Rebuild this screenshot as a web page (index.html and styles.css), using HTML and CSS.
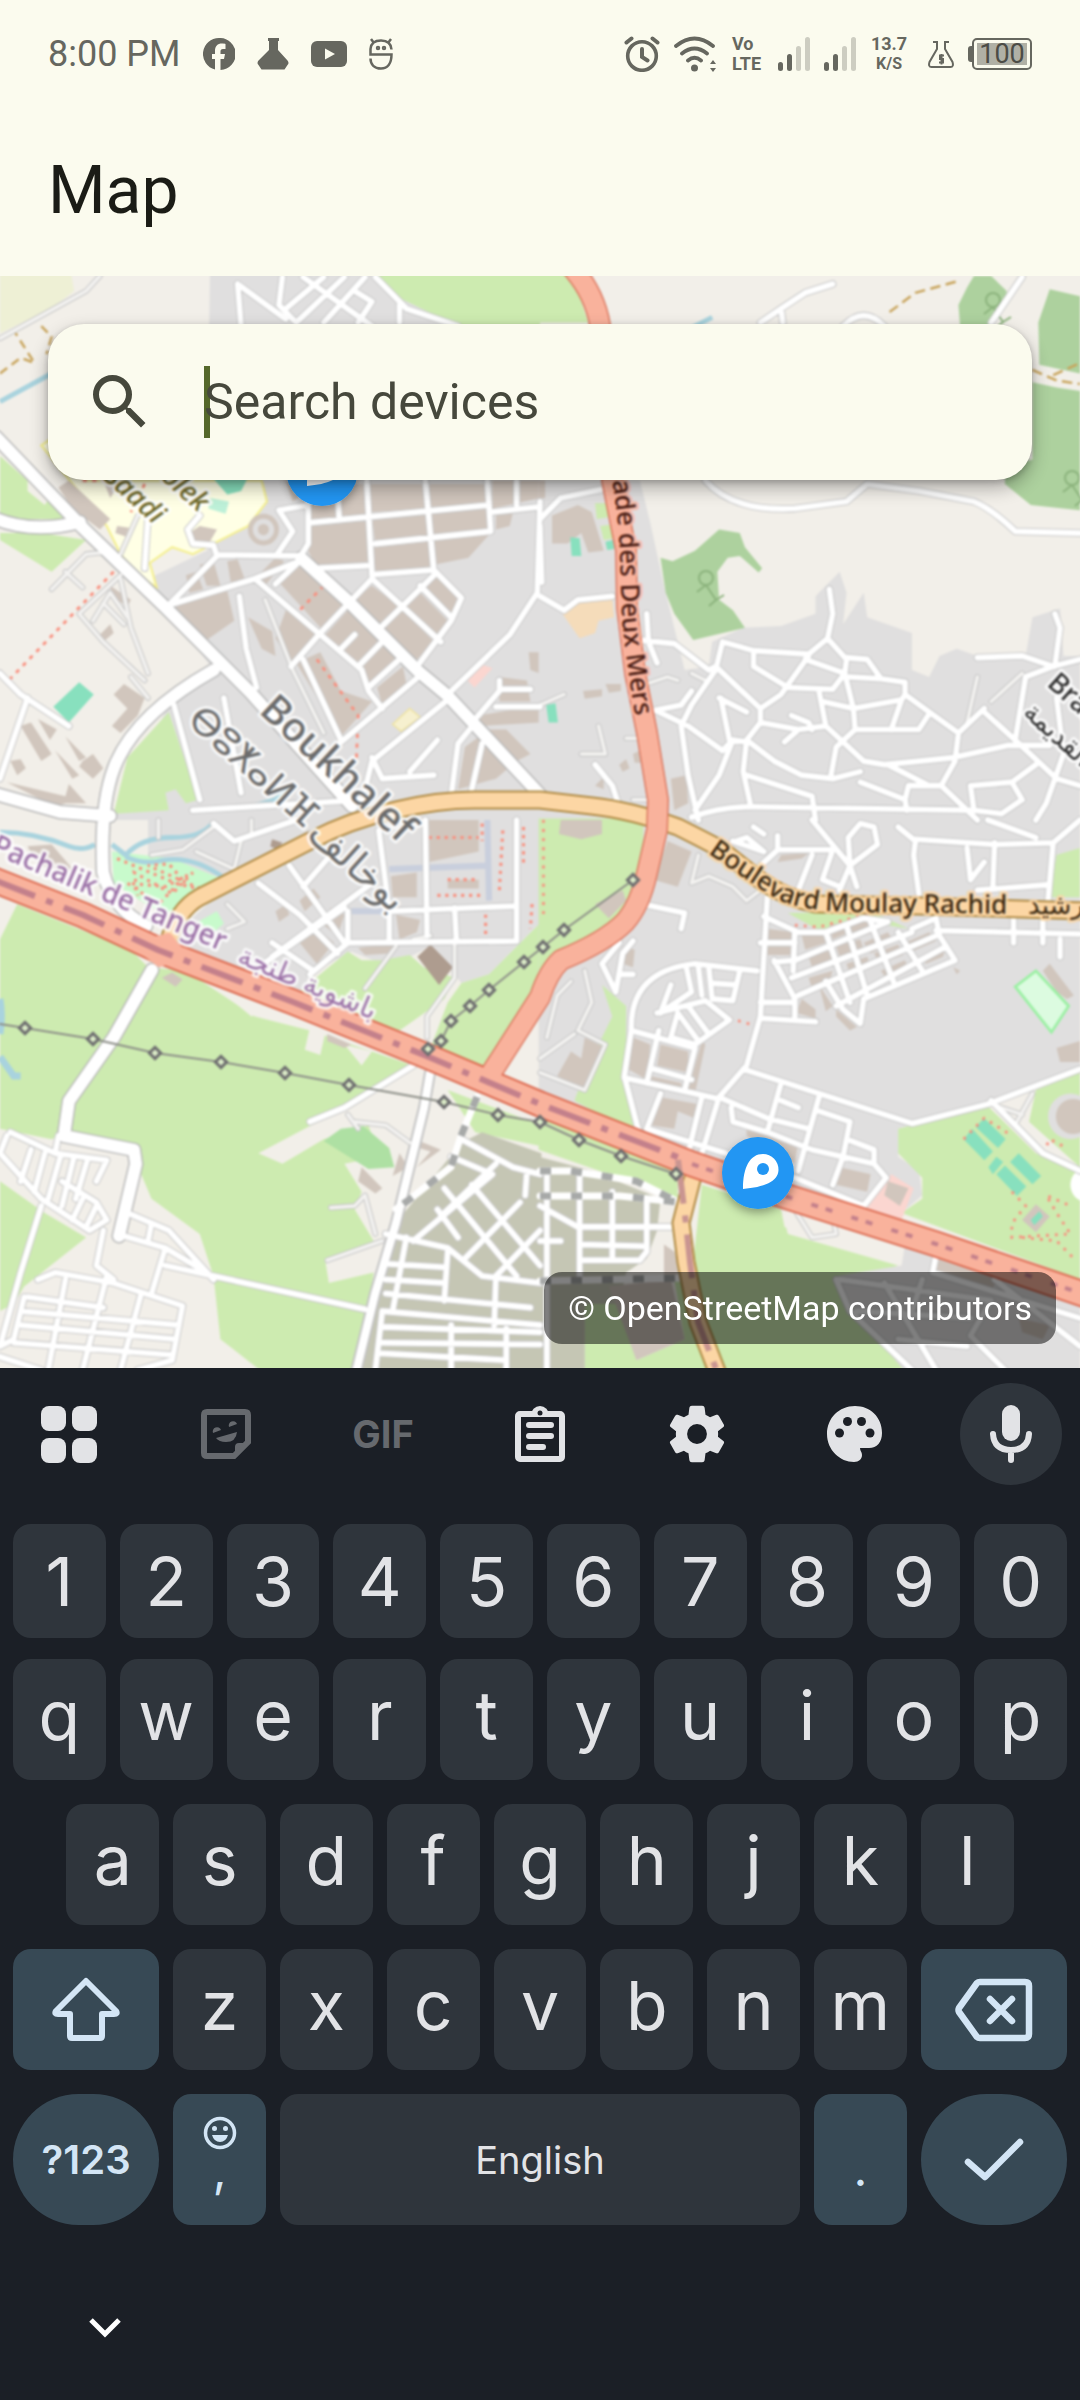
FILE: index.html
```html
<!DOCTYPE html>
<html lang="en">
<head>
<meta charset="utf-8">
<meta name="viewport" content="width=device-width, initial-scale=1">
<title>Map</title>
<link rel="stylesheet" href="styles.css">
</head>
<body>
<div class="phone">
  <header class="app-header">
    <div class="status-bar">
      <div class="status-left">
        <time class="clock">8:00 PM</time>
        <svg width="32" height="32" viewBox="0 0 32 32" aria-hidden="true"><path d="M16 0a16 16 0 0 0-4 31.500V21H9v-5h3v-3c0-5 2.500-7.500 7-7.500 1.500 0 3 .300 3.500.500V11h-2.500c-2 0-2.500 1-2.500 2.500V16h4.500l-1 5h-3.500v11A16 16 0 0 0 16 0z" fill="currentColor"/></svg>
        <svg width="32" height="32" viewBox="0 0 32 32" aria-hidden="true"><path d="M11 0h11v3h-1v9l9.500 10.500q2 2.500 0 4.500l-3 4.500H4.500l-3-4.500q-2-2 0-4.500L12 12V3h-1z" fill="currentColor"/></svg>
        <svg width="36" height="28" viewBox="0 0 36 28" aria-hidden="true"><rect y="1" width="36" height="26" rx="6" fill="currentColor"/><path d="M14 8.500v11l10-5.500z" fill="#fbfbee"/></svg>
        <svg width="24" height="32" viewBox="0 0 24 32" fill="none" stroke="currentColor" stroke-width="2.500" aria-hidden="true"><path d="M22.500 11.500C22 5 18 2.500 12 2.500S2 5 1.500 11v5.500h21c0 9-4 14-10.500 14S1.500 26.500 1.500 20.500M2 1l3 4M22 1l-3 4"/><circle cx="9" cy="10" r="1" /><circle cx="15" cy="10" r="1"/></svg>
      </div>
      <div class="status-right">
        <svg width="36" height="36" viewBox="0 0 36 36" fill="none" stroke="currentColor" stroke-width="3.600" stroke-linecap="round" aria-hidden="true"><circle cx="18" cy="20" r="14.300"/><path d="M18 13v8l5.500 3.500M2.500 6.500 7.500 2.500M33.500 6.500 28.500 2.500" stroke-width="4"/></svg>
        <svg width="44" height="36" viewBox="0 0 44 36" fill="none" stroke="currentColor" stroke-width="3.800" stroke-linecap="round" aria-hidden="true"><path d="M2 10Q20.500-5 39 10M8 17.500q12.500-10 25 0M14 24.500q6.500-5.500 13 0"/><circle cx="20.500" cy="32" r="3.500" fill="currentColor" stroke="none"/><path d="M39 24l3 4h-6zM39 36l3-4h-6z" fill="currentColor" stroke="none"/></svg>
        <span class="volte"><span>Vo</span><span>LTE</span></span>
        <svg width="32" height="34" viewBox="0 0 32 34" aria-hidden="true"><g fill="currentColor"><rect y="25" width="5" height="9" rx="2.500"/><rect x="9" y="17" width="5" height="17" rx="2.500"/></g><g fill="#cdcdc1"><rect x="18" y="9" width="5" height="25" rx="2.500"/><rect x="27" y="0" width="5" height="34" rx="2.500"/></g></svg>
        <svg width="32" height="34" viewBox="0 0 32 34" aria-hidden="true"><g fill="currentColor"><rect y="25" width="5" height="9" rx="2.500"/><rect x="9" y="17" width="5" height="17" rx="2.500"/></g><g fill="#cdcdc1"><rect x="18" y="9" width="5" height="25" rx="2.500"/><rect x="27" y="0" width="5" height="34" rx="2.500"/></g></svg>
        <span class="net-speed"><span>13.7</span><span class="net-unit">K/S</span></span>
        <svg width="26" height="28" viewBox="0 0 26 28" fill="none" stroke="currentColor" stroke-width="2" aria-hidden="true"><path d="M5 2h4v7L1.500 22q-1.500 5 2 5h19q3.500 0 2-5L17 9V2h4"/><path d="M16 15.500h-4v3.500h3v3.500h-4M13.500 14v10.500"/></svg>
        <span class="battery"><span class="battery-tip"></span><span class="battery-body"><span class="battery-level">100</span></span></span>
      </div>
    </div>
    <h1 class="title">Map</h1>
  </header>

  <main class="map">
    <svg class="map-canvas" viewBox="0 276 1080 1092" preserveAspectRatio="xMidYMid slice" role="img" aria-label="Street map of Boukhalef">
      <defs>
        <g id="minor">
          <path transform="translate(0 270) scale(.3444 .3508)" d="M690 40L700 160M690 40L830 140M820 20L810 100L860 150M880 20L1080 160M1000 20L860 150M1060 20L940 150M940 20L830 110M1030 60L1080 90L1040 150M1090 20L1180 110L1330 160M1160 100V150M895 600V780L870 820M905 720L1420 670M1090 780L1425 745L1415 600M1065 600L1080 870M1235 600L1260 860M920 850L1065 843M1085 868L1260 855L1340 935L1310 1000L1215 1125M980 640L985 710M1500 600V670M810 685L895 670M810 685L850 745L805 810M630 812L870 815M490 955L630 815L620 785L560 780L545 740L580 700M490 955L740 880L870 830M740 880L1050 1140L1070 1200L1110 1250M800 895L870 830M1080 880L930 1035L845 1130M1080 880L1280 1060M1260 870L1105 1020M1220 900L1310 990M1110 1060L1040 1130M1160 1110L1070 1190M990 1080L1030 1040M695 930L715 1080L745 1190M880 1110L990 1340M1215 1160L985 1350M1300 1225L1080 1400L1060 1480M1380 1290L1330 1350L1310 1500M1400 1350L1370 1480M1560 920L1480 1040L1300 1210M1568 660L1560 920M1430 690L1568 675M1080 1390L1110 1450L1260 1440M1270 1340L1190 1430M1450 1170V1200L1380 1280M1450 1195H1540M1440 1245H1568M505 1240L580 1510M650 1220L700 1490M560 1540L1060 1510M0 1150L60 1210L200 1300M80 1220L0 1450M430 700L420 850"/>
          <path transform="translate(540 270) scale(.3444 .3508)" d="M480 600Q560 690 740 680L890 660L950 610L1100 630L1260 660Q1310 680 1380 745L1568 750M850 40L770 65L700 110L640 150M700 110L705 150M880 160Q940 100 1000 160M1400 20L1310 150M0 710L60 650L180 625M0 930L70 970L110 940L210 930M0 730L5 890M840 910L850 980L835 1050L780 1095L620 1085L530 1060L510 1140L440 1240L410 1300L430 1440L460 1568M290 1055L390 1065L490 1140L510 1130L640 1250L700 1210L780 1100M310 980L315 1060L340 1120M620 1090V1130L720 1190L850 1195L885 1150L770 1110M835 1050L890 1110L885 1150L910 1250L915 1310L860 1360L845 1440M890 1105L950 1110L990 1165L1060 1175V1210L1130 1260L1215 1320L1205 1400L1165 1470L1270 1568M900 1160L990 1165M810 1200L830 1300L750 1310L640 1290M600 1345L560 1340L530 1370L430 1300L335 1255L410 1240L440 1200M820 1230L910 1250L1050 1225L1060 1210M1050 1225L1020 1310M915 1310H1100L1130 1265M640 1250V1290L600 1340L590 1430L610 1520M830 1300L940 1400L1000 1410L1200 1390L1360 1355H1480M560 1340L520 1440L450 1540M600 1340L680 1400L760 1440L850 1450L930 1430M600 1440L790 1500L800 1568M440 1560Q520 1530 620 1530L1250 1540M930 1460L1060 1510L1070 1470H1130M1010 1410L1130 1470H1165M1060 1510L1065 1540M1270 1105L1400 1100L1490 1130L1568 1110M1495 980L1510 1020L1495 1130M1490 1130L1410 1160L1380 1340L1500 1450L1568 1470M1290 1260L1380 1340M1215 1320L1290 1250M1500 1220L1520 1380L1470 1520L1440 1568M1440 1410L1370 1460L1400 1510L1340 1550L1260 1540L1250 1470L1370 1460M160 1410L210 1470L230 1530M525 1220L550 1340M520 1220L600 1260M730 1270L780 1290L790 1310M710 1345L745 1315"/>
          <path transform="translate(0 820) scale(.3444 .3508)" d="M840 130L1000 350M750 180L870 270L980 380M790 350L910 430M960 100L880 190M1080 180L790 390M1000 250L750 420M1010 350L900 440M1010 350L1500 345V0M1100 30L1130 260L1500 245M1235 0L1240 330M1320 250L1325 340M1010 260V350M1130 260V345M620 10L680 60L860 0M1200 700L1000 820L900 860M120 1100L60 1290L0 1500M0 950L120 1080L260 1170L310 1140L280 1090L180 1030M170 900L160 950L310 970L280 1030M30 890L160 950M20 900L0 950M90 940L60 1030M130 950L100 1060M175 960L140 1080M215 960L180 1100M255 965L220 1080M240 1080L210 1140M280 1100L250 1160M300 1170L280 1270L330 1310M340 1180L480 1220L600 1290M370 1120L490 1170L620 1310M480 1220L440 1350M440 1150L430 1200M480 1270L620 1300L1060 1395M110 1310L160 1290L330 1320L530 1385L500 1540L400 1568M190 1310L140 1568M310 1300L240 1568M410 1350L350 1568M80 1360L300 1390M60 1440L510 1480M70 1360L40 1480L0 1500M60 1400L520 1440M40 1490L500 1525M0 1530L120 1568M1340 910L1490 990L1568 1010M1310 960L1430 1010L1200 1200M1120 1180L1300 1220L1400 1300L1568 1320M1370 1040L1568 1270M1290 1050L1500 1300M1440 980L1280 1130M1510 1090L1350 1250M1270 1110L1330 1190M1568 1170L1440 1300M1120 1265L1290 1275M1120 1310L1290 1320M1120 1350L1540 1390M1110 1400L1568 1440M1110 1445L1568 1460M1110 1490L1568 1495M1100 1520L1470 1540M1180 1190L1140 1400M1300 1230L1290 1370M1440 1300L1435 1440M1310 1440V1568M1470 1450V1568M1110 1400L1090 1568M1530 1000L1525 1070"/>
          <path transform="translate(540 820) scale(.3444 .3508)" d="M570 60L600 50L650 90L560 60M620 20L650 40M790 0L900 130L920 190M690 45V85L850 85L820 170L870 190M640 130L690 85M790 100L750 200M900 130L980 70L970 20L930 10L895 50L900 130L870 200M1040 20L1090 60L1085 100L1100 210M1090 55L1320 70L1490 65L1475 230M1320 65L1315 190M1270 200L1470 185M1240 80L1250 170L1290 120M1490 65L1568 0M1300 0L1440 50M660 220L640 560L600 700L520 790L470 950M590 710L1080 865L1300 810L1568 710M650 275L750 320L830 320L940 280L1010 290M1080 310L1150 280L1160 330L1205 400L940 510L930 580L880 540L830 460M740 320L735 430M740 510V560M680 400L740 510M640 350H740M640 520H730M640 565L800 575M830 320L900 520M890 300L950 500M960 290L1030 470M1040 320L1110 430M680 405L740 400L1010 290M730 450L1080 320M750 500L1150 330M860 530L1180 360M1150 315L1568 325M1375 280V350M1460 290V350M1510 340V390M630 430L450 410Q260 430 265 600L245 730L290 900M425 420L440 490L350 550L380 470M460 420L470 500M490 420L500 510L560 515L580 430M495 465L570 470M340 550L480 515L550 570L450 640L380 620L400 550L460 630M430 530L490 610M265 600L450 650L420 770M245 735L520 795M345 600L310 750M350 780L310 880L540 950M470 790L430 950M330 710L440 740M520 790L660 850L780 880M555 820L560 860L660 890L790 940L970 980M700 750L660 890M810 790L750 1000M810 830L900 860L880 960L850 1040M890 910L970 940V980L1005 1020L940 1100L740 1020M700 800L750 820M300 240L420 265L410 310M230 350L180 410L220 490L240 380L270 345M230 440H270M1310 800L1460 950L1568 1000M0 1100L110 1160H390M20 1000V1568M115 1010V1300M210 1060V1250M310 1080V1230L290 1255H120M120 1210L300 1215M0 1200H60M1150 1240L1140 1290L1568 1420M860 1310L900 1400L1080 1568M870 1310L1310 1370L1250 1470L1350 1568M1000 1320L1150 1568M920 1400L1250 1420M1320 1310L1568 1500M1040 1480L1240 1500M1110 1310L1080 1400"/>
        </g>
        <g id="lane">
          <path transform="translate(0 270) scale(.3444 .3508)" d="M0 195L250 60L290 17M150 910L250 810L300 805M190 860L240 905M230 980L350 870M230 980L300 1060L420 1170M350 880L380 1020L430 1150M270 1000L320 920L370 990M300 950L360 1010M380 1160L430 1220M400 700L350 810M770 940L850 1140L940 1320"/>
          <path transform="translate(540 270) scale(.3444 .3508)" d="M120 1380H190L170 1300M1270 1160L1240 1290M1400 1150L1310 1230M310 1180L370 1160L400 1170M250 1335H300M270 1510H320M0 1240L70 1210M440 1150L480 1170"/>
          <path transform="translate(0 820) scale(.3444 .3508)" d="M1320 340L1320 450L1240 560V620M1150 360L1060 480M1010 840L1040 880M1030 860L1120 870L1190 920M960 1105L1030 1100L1060 1070L1090 1180M1110 1200L950 1255M460 0V50M730 0V40M440 100L530 85L620 20M570 90L680 140L700 60M660 240L710 290L660 310M1250 330L1200 340"/>
          <path transform="translate(540 820) scale(.3444 .3508)" d="M130 430L150 520L110 600L190 640L130 770L0 720M0 680L100 610M20 620L50 500L90 460M1385 860L1430 780M460 100L440 180L490 160L560 190L600 230L640 200M745 1120L790 1190L860 1180L850 1130M1340 820L1400 840"/>
        </g>
        <path id="major" d="M-4 437L20 462L83 528L165 607L250 692L352 806M301 558L348 601L418 671L448 696L545 800M-4 519Q34 534 80 522M214 670Q134 715 114 768Q100 805 103 872Q112 908 146 926M-4 794L60 812L110 816M152 970L114 1037L69 1101L64 1136L134 1150L136 1164L119 1236"/>
        <path id="link" d="M430 1073L424 1108L396 1223L375 1294L356 1372"/>
        <path id="trunk-side" d="M574 270Q595 295 600 325L612 480L626 550L627 607L635 673L647 733L658 800L657 830L647 873Q640 905 625 922Q605 942 561 960Q548 972 540 997L488 1078"/>
        <path id="trunk" d="M-6 880L83 915L158 950L293 1002L424 1055L540 1104L692 1164L788 1197L936 1244L1086 1295"/>
        <path id="secondary" d="M168 945Q176 910 200 897L310 841Q350 820 396 810Q440 799 482 800L540 800L592 806Q630 810 678 827Q700 838 719 848L760 880Q785 898 815 904L919 906L1086 911M692 1180L681 1223L686 1262L698 1322L718 1374"/>
        <path id="rocade" d="M603 440L612 480Q619 520 620 560L622 620Q628 680 640 740"/>
        <path id="boulevard" d="M708 853Q740 876 775 898Q800 911 850 912L1040 914"/>
        <g id="node"><rect x="-4" y="-4" width="8" height="8" transform="rotate(45)"/></g>
        <g id="tree" fill="none" stroke="#8cb37d" stroke-width="2"><circle cx="0" cy="0" r="7"/><path d="M0 7L-9 14M0 7L10 22M10 22L18 17M10 22L3 28"/></g>
        <g id="marker">
          <circle r="36" fill="#2196f3"/>
          <path d="M-15 16C-15-6-8-19 5-19A15.500 15.500 0 0 1 20.500-3C20 9 6 14-15 16z" fill="#fff"/>
          <circle cx="5" cy="-4" r="6" fill="#2196f3"/>
        </g>
        <filter id="marker-shadow" x="-40%" y="-40%" width="180%" height="180%"><feDropShadow dx="0" dy="4" stdDeviation="5" flood-opacity=".35"/></filter>
      </defs>

      <g class="tiles">
      <rect x="-20" y="250" width="1120" height="1140" fill="#f2efe9"/>

      <!-- land use, north-west -->
      <g transform="translate(0 270) scale(.3444 .3508)">
        <path fill="#eef0d5" d="M0 0H205L215 60L150 110L0 180z"/>
        <path fill="#e0dfdf" d="M610 0H1090L1330 160H1568V1568H330L480 1260L620 1140L480 960L430 880L600 800L780 650L600 600z"/>
        <path fill="#ffffe5" stroke="#f5f08f" stroke-width="6" d="M120 500L150 480L250 600H760L775 660L720 730L640 770L560 810L500 790L435 835L455 905L400 870L350 810L310 730z"/>
        <path fill="#cdebb0" d="M1085 0H1568V240L1330 160L1160 80zM0 530L80 600V630L130 670L150 640L220 710H0zM0 750H120L250 770L150 860L0 770zM490 1260L575 1510L540 1520L510 1480L480 1490L490 1540L330 1550L370 1390z"/>
        <path fill="#88e0be" d="M230 1175L272 1210L200 1290L155 1245zM620 595H718L700 630L660 640z"/>
        <path fill="#bdf0d8" d="M610 650L665 660L655 695L605 680z"/>
        <path fill="#fbd6d0" d="M1400 1125L1430 1135L1378 1190L1358 1170z"/>
        <path fill="#f6f0cf" stroke="#efe3a0" stroke-width="4" d="M1190 1250L1220 1275L1165 1315L1140 1295z"/>
        <path fill="#d1c6bd" d="M500 960L660 915L680 1000L600 1055L570 1060zM905 730L1065 715L1080 840L920 850L895 800zM1080 700L1235 690L1245 765L1090 780zM1250 690L1420 675L1425 745L1250 760zM1085 790L1245 775L1255 850L1090 860zM1255 770L1420 755L1360 820L1260 840zM905 610H1060L1065 705L905 715zM1070 610H1230L1235 680L1080 690zM1245 610H1410L1420 665L1250 680zM1430 600H1568V650L1430 680zM1440 690L1490 690L1480 730L1440 740zM810 890L870 840L1005 940L940 1030zM1080 900L1160 960L1100 1010L1020 945zM1170 970L1260 1060L1210 1110L1115 1020zM1220 900L1260 870L1330 930L1310 985zM1215 915L1300 1000L1270 1050L1175 955zM945 1040L1010 970L1105 1060L1040 1130L990 1080zM1050 1130L1110 1070L1160 1110L1070 1190zM790 910L850 960L920 1030L850 1120L800 1050L830 970zM580 840L620 830L640 900L600 900zM660 830L690 825L710 880L670 890zM540 870L570 860L590 910L550 920zM750 870L800 820L825 830L770 900zM720 990L790 1030L800 1100L760 1080zM860 1120L930 1090L990 1200L1080 1230L990 1330zM1095 1190L1170 1130L1180 1180L1110 1240zM1390 1270L1568 1240V1290L1390 1300zM1420 1310H1470L1540 1380L1500 1400L1440 1450L1330 1480L1350 1360zM1450 1160L1530 1170L1540 1230H1450zM1535 1090H1568V1150L1540 1140zM170 620L200 600L320 710L290 740L210 680zM340 730L375 735L365 760L335 750zM550 750L580 730L630 740L600 790L560 770zM830 600L880 640L850 660zM300 600L340 620L320 650zM330 1210L360 1180L420 1220L400 1270L350 1320L325 1300L370 1250zM60 1300L90 1290L150 1380L120 1400zM110 1280L165 1310L145 1340zM160 1370L230 1440L210 1450zM180 1350L230 1400zM190 1330L250 1390L230 1400zM240 1400L270 1380L300 1420L270 1450L230 1415zM30 1400L60 1395L75 1420L50 1440zM20 1460L190 1500L200 1465L250 1520L190 1520L160 1530zM290 1040L320 1010L330 1035L300 1060zM320 900L380 940L370 960L325 930z"/>
        <circle cx="765" cy="740" r="38" fill="none" stroke="#d1c6bd" stroke-width="14"/><circle cx="765" cy="740" r="16" fill="#d1c6bd"/>
        <path fill="none" stroke="#a9d3de" stroke-width="14" d="M0 375L150 295M730 1530L800 1510L840 1470"/>
        <path fill="none" stroke="#c8a45c" stroke-width="7" stroke-dasharray="26 16" d="M0 295L60 250L100 265L45 180M120 160L150 190L135 240"/>
        <path fill="none" stroke="#f98f7e" stroke-width="8" stroke-dasharray="12 16" d="M330 860L30 1165M940 900L870 970M920 1110L1040 1270L1035 1390M240 600H300M420 610L380 690"/>
      </g>

      <!-- land use, north-east -->
      <g transform="translate(540 270) scale(.3444 .3508)">
        <path fill="#e0dfdf" d="M-4 600H290L320 720L360 900L420 1140L490 1130L500 1060L590 1020L700 1015L800 980V930L870 860L890 920L880 1010L940 920L950 990L1080 1035V1140L1130 1160L1160 1100L1210 1080L1270 1100H1410L1430 990L1510 965L1520 1100H1568V1572H-4z"/>
        <path fill="#add19e" d="M350 820L385 830L450 800L520 740L580 750L595 790L645 850L635 862L580 815L545 820L515 860L520 940L560 970L595 1020L445 1055L390 980L365 920zM1240 50L1260 17H1310L1355 60L1350 110L1310 160H1220L1215 100zM1480 55L1568 75V295L1450 270L1447 150zM1430 320L1500 335L1568 345V685L1425 670L1350 610V560L1430 540z"/>
        <path fill="#cdebb0" d="M-4 0H90L140 150H-4zM160 665H200V705L165 710zM175 730L215 725V765L185 770z"/>
        <path fill="#d1c6bd" d="M35 700L110 670L150 690L185 800L140 805L120 750L80 780L35 780zM125 1200L180 1195V1215L130 1222zM190 1180L235 1180V1200L200 1205zM380 1450L425 1440L430 1520L390 1540zM270 1380L300 1365V1405L275 1405zM230 1410L250 1395L260 1420L240 1430zM160 1470L185 1445V1480zM-4 600H15V650H-4z"/>
        <path fill="#f5dcba" d="M65 980L110 950L210 940L215 990L170 1000L160 1035L115 1050z"/>
        <path fill="#88e0be" d="M88 762L115 765L120 815L92 815zM190 775L212 770L215 795L195 798zM18 1240L45 1235L52 1290L25 1290z"/>
        <path fill="none" stroke="#a9d3de" stroke-width="14" d="M440 165L500 135"/>
        <path fill="none" stroke="#c8a45c" stroke-width="7" stroke-dasharray="30 16" d="M1015 120L1090 65L1220 30M1430 285L1500 315L1568 325M1490 300L1568 265"/>
      </g>

      <!-- land use, south-west -->
      <g transform="translate(0 820) scale(.3444 .3508)">
        <path fill="#e0dfdf" d="M430-4H1572V290L1420 440L1340 465L1250 360L1190 390L1110 410L1020 375L900 440L880 490L480 350L680 170L430 120z"/>
        <path fill="#c8facc" d="M325 90L500 110L650 170L510 270L440 250L330 180zM575 290L630 260L650 295L620 320z"/>
        <path fill="#cdebb0" d="M50 240L380 370L430 420L540 430L740 560L900 600L1200 700L1000 820L750 950L820 980L940 910L1070 870L1100 960L1000 980L1050 1060L1030 1110L1085 1200L945 1260L955 1320L1085 1290L1070 1400L1030 1572H760L640 1480L620 1300L580 1180L440 1080L410 1010L380 930L190 890L150 910L0 880V340zM0 1030L130 1120L250 1190L70 1330L40 1380L0 1400zM930 440L1010 375L1050 400H1110L1190 385L1230 420L1320 450L1290 510L1160 600L1000 560L870 490zM1572 290V440L1450 690L1390 710L1250 650L1300 520L1340 465L1420 440zM1300 770L1572 870V930L1380 890z"/>
        <path fill="#f2efe9" d="M900 590L945 605L930 670L885 655zM1000 640L1080 660L1050 700zM620 470L760 545L730 560z"/>
        <path fill="#c5c6b4" d="M1140 1160L1340 920L1400 890L1572 950V1572H1050L1120 1200z"/>
        <path fill="#aee0a3" d="M940 915L990 880L1055 872L1130 935L1145 990L1070 995z"/>
        <path fill="#ae9c8f" d="M1250 355L1315 420L1275 470L1212 390zM790 55L820 65L805 85L785 75z"/>
        <path fill="#d1c6bd" d="M1245 0H1390V90L1245 120zM1135 160L1210 150V220H1140zM1300 170H1390V195H1300zM1150 270L1220 285L1210 320L1160 340zM1040 365L1150 350L1140 380L1060 385zM870 230L910 195L930 220L885 260zM960 250L1000 270L980 330L940 300zM870 350L920 310L970 350L920 410zM800 260L830 240L840 270L810 290zM80 75L150 70L220 150L110 130zM470 450L500 435L530 455L510 475zM1205 910L1280 940L1210 990L1250 945L1200 930zM1160 950L1185 990L1140 1015zM1050 990L1110 1050L1090 1065L1040 1030zM950 610L1020 640L1000 650L950 630z"/>
        <path fill="none" stroke="#c9cfdd" stroke-width="18" d="M1415 0L1420 230M1130 140L1415 130M1020 260L1110 260"/>
        <path fill="none" stroke="#a9d3de" stroke-width="14" d="M0 35Q100 35 200 75Q240 90 275 70M325 70L365 100Q410 50 500 50T620 5M365 105Q420 130 470 115Q560 100 650 165"/>
        <path fill="none" stroke="#a9d3de" stroke-width="20" d="M0 510Q8 560 0 610M0 675L40 730H60"/>
        <path fill="none" stroke="#f98f7e" stroke-width="9" stroke-dasharray="9 14" d="M340 110L510 180L590 200L430 130L490 125L530 170L460 240L370 180L480 190L560 150L500 210L390 150L400 215M1245 50H1390M1400 10V60M1460 30L1450 200M1300 170H1390M1270 215H1400M1410 270V330M1520 20V130M1545 240L1540 310"/>
      </g>

      <!-- land use, south-east -->
      <g transform="translate(540 820) scale(.3444 .3508)">
        <path fill="#e0dfdf" d="M-4-4H1568V720L1300 810L1040 880V960L1100 1000L1110 1070L1050 1120L470 980L-4 800z"/>
        <path fill="#cdebb0" d="M-4-4H300V180L180 350L-4 430zM180 470L250 530V740L290 900L100 800L130 720L210 560zM1040 880L1300 815L1440 950L1568 1010V1310L1050 1120L1110 1080V1020L1040 950zM1568 720L1440 770L1420 860L1568 990zM470 1040L700 1110L720 1180L1040 1270L900 1320L860 1320L930 1420L1060 1572H500L440 1300zM720 265L960 260L1070 310L1010 300L820 320zM1500 100L1568 80V220H1480zM-4 850L400 990V1080L230 1020L-4 940zM130 1380L230 1360L280 1540L420 1480L390 1310L440 1300L520 1572H130z"/>
        <path fill="#e0dfdf" d="M860 1300L1050 1270L1060 1210L1568 1380V1572H1060L930 1420z"/>
        <path fill="#f2efe9" d="M700 1110L860 1150L1060 1210L1040 1270L850 1200L710 1160zM340 1090L400 1100L380 1220L260 1290L300 1220z"/>
        <path fill="#c5c6b4" d="M-4 960L150 1000L350 1080L340 1170L310 1250L250 1290L230 1380H-4zM-4 1310H130V1572H-4z"/>
        <path fill="#d1c6bd" d="M370 60L440 90L400 190L330 170zM160 240L240 200L250 230L200 280zM240 360L275 370L270 420L240 410zM660 310L735 320V340H660zM660 360H735V385H660zM700 100L780 95L760 110L690 120zM760 330L820 325L830 350L770 370zM840 300L890 290L900 320L850 340zM900 300L960 285L970 320L910 340zM780 390L850 370L860 400L790 420zM860 360L930 340L940 370L870 390zM940 350L1010 320L1030 350L960 380zM890 410L950 390L960 420L900 440zM970 380L1040 355L1055 385L985 410zM1060 350L1130 320L1150 345L1080 375zM990 430L1060 400L1070 430L1010 460zM1110 390L1180 360L1170 390L1120 410zM780 450L850 430L840 460L790 480zM760 510L800 540V565L745 550zM860 540L920 590L900 600L860 560zM810 470L850 530L830 545zM270 620L320 640L310 740L255 710zM350 640L430 660V720L340 700zM470 630L480 640L450 780L430 770zM320 730L410 750V770L320 750zM350 790L460 810L450 850L400 830L390 880L320 870zM600 880L750 920L740 980L600 900zM130 620L190 650L130 770L50 730L90 660L120 680zM870 990L960 1010L950 1060L860 1040zM1460 430L1480 410L1550 500L1530 510L1500 490zM1500 650L1568 630V690L1510 690zM60 0H180V40L120 55L55 40zM360 1210L390 1230L410 1290L360 1310zM200 1330L380 1310L420 1480L280 1540zM1150 1250L1330 1310L1310 1340L1140 1300zM1390 1420L1480 1440L1460 1480L1400 1460zM1200 420L1220 430L1210 440z"/>
        <path fill="#fbd6d0" d="M1020 1010L1085 1050L1050 1140L940 1110z"/><path fill="#d1c6bd" d="M1010 1030L1070 1050L1045 1100L1000 1070z"/>
        <path fill="#dcfbe0" stroke="#9cf0a4" stroke-width="8" d="M1440 430L1535 530L1485 605L1380 475z"/>
        <path fill="#88e0be" d="M1290 850L1352 910L1330 935L1265 875zM1255 880L1315 945L1290 970L1230 910zM1325 960L1345 975L1315 1010L1302 990zM1390 950L1455 1015L1430 1038L1365 975zM1350 985L1412 1045L1385 1072L1325 1010z"/>
        <path fill="#d1c6bd" d="M1440 1095L1480 1130L1440 1175L1400 1140z"/><path fill="#88e0be" d="M1450 1115L1460 1130L1435 1155L1425 1140z"/>
        <circle cx="1540" cy="845" r="65" fill="#e0dfdf"/><circle cx="1548" cy="845" r="50" fill="#d1c6bd"/><circle cx="1590" cy="1040" r="50" fill="#fff"/>
        <path fill="none" stroke="#f98f7e" stroke-width="8" stroke-dasharray="8 18" d="M10 0V280M740 300L810 305L960 265M550 565L620 585M1230 910L1290 850L1370 900M1370 1060L1410 1100L1370 1150V1190L1540 1180L1500 1120L1470 1070L1540 1100M1400 1190L1500 1200L1550 1250M1340 800L1500 730M1460 950L1480 910L1520 930"/>
      </g>

      <use href="#tree" x="706" y="578"/><use href="#tree" x="993" y="300"/><use href="#tree" x="1072" y="478"/>

      <g class="lines">
        <use href="#lane" stroke="#c8c8c8" stroke-width="16"/>
        <use href="#minor" stroke="#cacaca" stroke-width="22"/>
        <use href="#link" stroke="#c4c4c4" stroke-width="12"/>
        <use href="#major" stroke="#b9b9b9" stroke-width="15"/>
        <use href="#lane" stroke="#f3f2f0" stroke-width="10"/>
        <use href="#minor" stroke="#fff" stroke-width="16"/>
        <use href="#link" stroke="#fff" stroke-width="8"/>
        <use href="#major" stroke="#fff" stroke-width="12"/>

        <path stroke="#fff" stroke-width="7" d="M477 1097L461 1136L451 1167L410 1199L396 1209M540 1171L571 1171L636 1181L678 1202M540 1196L620 1196L678 1202M540 1281L685 1278"/>
        <path class="rail-dash" stroke="#a7a9a8" stroke-width="7" stroke-dasharray="11 20" d="M477 1097L461 1136L451 1167L410 1199L396 1209M540 1171L571 1171L636 1181L678 1202M540 1196L620 1196L678 1202M540 1281L685 1278"/>

        <use href="#secondary" stroke="#b08b45" stroke-width="19"/>
        <use href="#secondary" stroke="#fcd6a4" stroke-width="15"/>
        <use href="#trunk-side" stroke="#dc7a62" stroke-width="22"/>
        <use href="#trunk" stroke="#dc6a50" stroke-width="27"/>
        <use href="#trunk-side" stroke="#f9b29c" stroke-width="19"/>
        <use href="#trunk" stroke="#f9b29c" stroke-width="23"/>
        <path stroke="#f9b29c" stroke-width="10" fill="#f9b29c" d="M140 946L160 962L180 953L168 938z"/>
        <path stroke="#c3808b" stroke-width="6" stroke-linecap="butt" stroke-dasharray="44 12 7 12" d="M-6 880L83 915L158 950L293 1002L424 1055L540 1104L680 1158"/>
        <path stroke="#c3808b" stroke-width="4" stroke-linecap="butt" stroke-dasharray="7 8 7 20" d="M692 1164L788 1197L936 1244L1086 1295"/>
        <path stroke="#c99591" stroke-width="6" stroke-dasharray="44 12 7 12" stroke-linecap="butt" d="M678 1160L685 1215L690 1262L698 1322L718 1374"/>

        <path stroke="#8d8f88" stroke-width="2" d="M0 1024L25 1028L93 1039L155 1053L221 1062L285 1073L349 1085L444 1102L498 1115L540 1122L579 1140L621 1156L676 1174M428 1049L441 1041L451 1021L470 1006L489 990L524 962L543 947L564 930L633 880"/>
      </g>
      <g fill="#dcecc8" stroke="#6f6f70" stroke-width="3">
        <use href="#node" x="25" y="1028"/><use href="#node" x="93" y="1039"/><use href="#node" x="155" y="1053"/><use href="#node" x="221" y="1062"/><use href="#node" x="285" y="1073"/><use href="#node" x="349" y="1085"/><use href="#node" x="444" y="1102"/><use href="#node" x="498" y="1115"/><use href="#node" x="540" y="1122"/><use href="#node" x="579" y="1140"/><use href="#node" x="621" y="1156"/><use href="#node" x="676" y="1174"/>
        <use href="#node" x="428" y="1049"/><use href="#node" x="441" y="1041"/><use href="#node" x="451" y="1021"/><use href="#node" x="470" y="1006"/><use href="#node" x="489" y="990"/><use href="#node" x="524" y="962"/><use href="#node" x="543" y="947"/><use href="#node" x="564" y="930"/><use href="#node" x="633" y="880"/>
      </g>

      <g class="map-label">
        <g class="place">
          <text transform="translate(258 712) rotate(43)" font-size="40">Boukhalef</text>
          <text transform="translate(186 722) rotate(42)" font-size="36">ⴱⵓⵅⴰⵍⴼ</text>
          <text transform="translate(306 836) rotate(42)" font-size="38">بوخالف</text>
        </g>
        <g class="district">
          <text transform="translate(-10 853) rotate(23)" font-size="28">Pachalik de Tanger</text>
          <text transform="translate(236 962) rotate(23)" font-size="28">باشوية طنجة</text>
        </g>
        <g class="school">
          <text transform="translate(102 478) rotate(42)" font-size="28">Saadi</text>
          <text transform="translate(142 462) rotate(42)" font-size="28">Molek</text>
        </g>
        <g class="street">
          <text class="on-trunk" font-size="26"><textPath href="#rocade" startOffset="42">ade des Deux Mers</textPath></text>
          <text class="on-secondary" font-size="26"><textPath href="#boulevard">Boulevard Moulay Rachid</textPath></text>
          <text class="on-secondary" font-size="26" x="1028" y="914">رشيد</text>
          <text transform="translate(1046 685) rotate(42)" font-size="28">Branes</text>
          <text transform="translate(1022 714) rotate(42)" font-size="27">القديمة</text>
        </g>
      </g>
      </g>

      <use href="#marker" x="322" y="470" filter="url(#marker-shadow)"/>
      <use href="#marker" x="758" y="1173" filter="url(#marker-shadow)"/>
    </svg>

    <form class="search" role="search">
      <svg class="search-icon" viewBox="0 0 24 24" width="72" height="72" aria-hidden="true"><path fill="currentColor" d="M15.500 14h-.790l-.280-.270A6.470 6.470 0 0 0 16 9.500 6.500 6.500 0 1 0 9.500 16c1.610 0 3.090-.590 4.230-1.570l.270.280v.790l5 4.990L20.490 19l-4.990-5zm-6 0C7.010 14 5 11.990 5 9.500S7.010 5 9.500 5 14 7.010 14 9.500 11.990 14 9.500 14z"/></svg>
      <span class="caret"></span>
      <input class="search-input" type="text" placeholder="Search devices" aria-label="Search devices">
    </form>
    <a class="attribution" href="#copyright">© OpenStreetMap contributors</a>
  </main>

  <section class="keyboard" aria-label="Keyboard">
    <div class="tools">
      <button class="tool" type="button" aria-label="Features"><svg width="58" height="58" viewBox="0 0 58 58" fill="currentColor"><rect x="1" y="1" width="25" height="25" rx="8"/><rect x="32" y="1" width="25" height="25" rx="8"/><rect x="1" y="33" width="25" height="25" rx="8"/><rect x="32" y="33" width="25" height="25" rx="8"/></svg></button>
      <button class="tool dim" type="button" aria-label="Stickers"><svg width="50" height="50" viewBox="0 0 50 50"><path d="M6 3H44Q47 3 47 6V33L33 47H6Q3 47 3 44V6Q3 3 6 3z" fill="none" stroke="currentColor" stroke-width="6"/><path d="M34 49V38Q34 34 38 34H49zM15 29L36 23Q35 33 25 33Q18 33 15 29zM12 24a4 4 0 1 1 8-3zM28 18a4 4 0 1 1 8-3z" fill="currentColor"/></svg></button>
      <button class="tool dim gif" type="button">GIF</button>
      <button class="tool" type="button" aria-label="Clipboard"><svg width="50" height="58" viewBox="0 0 50 58"><rect x="3" y="9" width="44" height="45" rx="2" fill="none" stroke="currentColor" stroke-width="6"/><path d="M16 10a9 9 0 0 1 18 0z" fill="currentColor"/><circle cx="25" cy="8" r="2.500" fill="#1b1f26"/><path d="M14 20H36M14 31H36M14 42H28" stroke="currentColor" stroke-width="6" stroke-linecap="round"/></svg></button>
      <button class="tool" type="button" aria-label="Settings"><svg width="68" height="68" viewBox="0 0 24 24" fill="currentColor"><path d="M19.400 13a7.800 7.800 0 0 0 0-2l1.900-1.500c.300-.200.300-.500.200-.800l-1.800-3.100c-.200-.400-.600-.500-.900-.400l-2.200.9a7 7 0 0 0-1.600-.9l-.3-2.400c-.1-.500-.4-.8-.9-.8h-3.600c-.5 0-.8.300-.9.800L9 5.200a7 7 0 0 0-1.600.9l-2.200-.9c-.3-.1-.7 0-.9.400L2.500 8.700c-.1.300-.1.600.2.800L4.600 11a7.800 7.800 0 0 0 0 2l-1.900 1.500c-.3.200-.3.500-.2.800l1.800 3.100c.2.400.6.500.9.400l2.200-.9c.5.400 1 .7 1.600.9l.3 2.400c.1.500.4.800.9.800h3.600c.5 0 .8-.3.9-.8l.3-2.400a7 7 0 0 0 1.600-.9l2.200.9c.3.100.7 0 .9-.4l1.800-3.100c.1-.3.100-.6-.2-.8zM12 15.500a3.500 3.500 0 1 1 0-7 3.500 3.500 0 0 1 0 7z"/></svg></button>
      <button class="tool" type="button" aria-label="Theme"><svg width="57" height="58" viewBox="0 0 57 58"><path d="M29 1C13 1 1 13 1 29S14 57 28 57C33 57 36 54 36 50C36 47 34 46 34 43H43C51 43 56 37 56 28C56 12 44 1 29 1z" fill="currentColor"/><g fill="#1b1f26"><circle cx="13.500" cy="28" r="4.500"/><circle cx="21.500" cy="16.500" r="4.500"/><circle cx="35.500" cy="16.500" r="4.500"/><circle cx="44" cy="28" r="4.500"/></g></svg></button>
      <button class="tool mic" type="button" aria-label="Voice input"><svg width="44" height="60" viewBox="0 0 44 60"><rect x="13" y="1" width="18" height="36" rx="9" fill="currentColor"/><path d="M4 30Q5 46 22 46T40 30M22 46V56" fill="none" stroke="currentColor" stroke-width="6" stroke-linecap="round"/></svg></button>
    </div>

    <div class="keys">
      <div class="row digits">
        <button class="key" type="button">1</button><button class="key" type="button">2</button><button class="key" type="button">3</button><button class="key" type="button">4</button><button class="key" type="button">5</button><button class="key" type="button">6</button><button class="key" type="button">7</button><button class="key" type="button">8</button><button class="key" type="button">9</button><button class="key" type="button">0</button>
      </div>
      <div class="row">
        <button class="key" type="button">q</button><button class="key" type="button">w</button><button class="key" type="button">e</button><button class="key" type="button">r</button><button class="key" type="button">t</button><button class="key" type="button">y</button><button class="key" type="button">u</button><button class="key" type="button">i</button><button class="key" type="button">o</button><button class="key" type="button">p</button>
      </div>
      <div class="row">
        <button class="key indent" type="button">a</button><button class="key" type="button">s</button><button class="key" type="button">d</button><button class="key" type="button">f</button><button class="key" type="button">g</button><button class="key" type="button">h</button><button class="key" type="button">j</button><button class="key" type="button">k</button><button class="key" type="button">l</button>
      </div>
      <div class="row">
        <button class="key special wide" type="button" aria-label="Shift"><svg width="68" height="66" viewBox="0 0 68 66" fill="none" stroke="currentColor" stroke-width="6" stroke-linejoin="round"><path d="M34 4L64 34Q66 37 62 37H50V59Q50 61 48 61H20Q18 61 18 59V37H6Q2 37 4 34z"/></svg></button><button class="key" type="button">z</button><button class="key" type="button">x</button><button class="key" type="button">c</button><button class="key" type="button">v</button><button class="key" type="button">b</button><button class="key" type="button">n</button><button class="key" type="button">m</button><button class="key special wide" type="button" aria-label="Backspace"><svg width="78" height="64" viewBox="0 0 78 64" fill="none" stroke="currentColor" stroke-width="6.500" stroke-linejoin="round" stroke-linecap="round"><path d="M25 4H70Q74 4 74 8V56Q74 60 70 60H25Q23 60 22 59L4 34Q3 32 4 30L22 5Q23 4 25 4zM35 21L57 43M57 21L35 43"/></svg></button>
      </div>
      <div class="row bottom">
        <button class="key special wide pill mode" type="button">?123</button><button class="key special comma" type="button"><svg width="34" height="34" viewBox="0 0 34 34" aria-hidden="true"><circle cx="17" cy="17" r="14.500" fill="none" stroke="currentColor" stroke-width="3.500"/><path d="M9 19H25Q23 26 17 26T9 19z" fill="currentColor"/><circle cx="11.500" cy="12.500" r="2.500" fill="currentColor"/><circle cx="22.500" cy="12.500" r="2.500" fill="currentColor"/></svg><span>,</span></button><button class="key space" type="button">English</button><button class="key special period" type="button">.</button><button class="key special wide pill" type="button" aria-label="Done"><svg width="60" height="44" viewBox="0 0 60 44" fill="none" stroke="currentColor" stroke-width="6.500" stroke-linecap="round" stroke-linejoin="round"><path d="M4 24L21 39L56 4"/></svg></button>
      </div>
    </div>

    <div class="nav">
      <button class="hide-keyboard" type="button" aria-label="Hide keyboard"><svg width="32" height="20" viewBox="0 0 32 20" fill="none" stroke="currentColor" stroke-width="5"><path d="M2 2L16 16L30 2"/></svg></button>
    </div>
  </section>
</div>
</body>
</html>
```
FILE: styles.css
```css
* {
  box-sizing: border-box;
}

body {
  margin: 0;
  font-family: Roboto, sans-serif;
  background: #1b1f26;
}

button {
  margin: 0;
  padding: 0;
  border: 0;
  background: none;
  color: inherit;
  font: inherit;
}

svg {
  display: block;
  flex: none;
}

.phone {
  display: flex;
  flex-direction: column;
  min-height: 100vh;
}

/* status bar and title */
.app-header {
  background: #fbfbee;
}

.status-bar {
  display: flex;
  justify-content: space-between;
  align-items: center;
  height: 108px;
  padding: 0 48px;
  color: #66675f;
}

.status-left,
.status-right {
  display: flex;
  align-items: center;
}

.status-left {
  gap: 22px;
}

.status-right {
  gap: 14px;
}

.clock {
  font-size: 36px;
}

.volte,
.net-speed {
  display: flex;
  flex-direction: column;
  font-weight: 700;
  font-size: 18px;
  line-height: 20px;
}

.volte {
  width: 32px;
}

.net-speed {
  width: 38px;
  margin-right: 6px;
  align-items: center;
}

.net-unit {
  font-size: 16px;
}

.battery {
  display: flex;
  align-items: center;
}

.battery-tip {
  width: 4px;
  height: 16px;
  border-radius: 3px 0 0 3px;
  background: #66675f;
}

.battery-body {
  padding: 3px;
  border: 2px solid #66675f;
  border-radius: 5px;
}

.battery-level {
  display: block;
  width: 50px;
  background: #b0b0a5;
  color: #4c4c46;
  font-size: 27px;
  line-height: 22px;
  text-align: center;
}

.title {
  margin: 0;
  padding: 44px 48px 46px;
  color: #1b1c16;
  font-size: 66px;
  font-weight: 400;
  line-height: 78px;
}

/* map */
.map {
  position: relative;
  display: flex;
  flex: 1;
  flex-direction: column;
  justify-content: space-between;
  align-items: flex-end;
  min-height: 640px;
  padding: 48px 24px 24px;
  overflow: hidden;
}

.map-canvas {
  position: absolute;
  inset: 0;
  width: 100%;
  height: 100%;
}

.tiles {
  filter: blur(1px);
}

.lines {
  fill: none;
  stroke-linejoin: round;
  stroke-linecap: round;
}

.rail-dash {
  stroke-linecap: butt;
}

.map-label text {
  font-family: "Noto Sans", "DejaVu Sans", sans-serif;
  font-weight: 500;
  paint-order: stroke;
  stroke: #fff;
  stroke-opacity: .8;
  stroke-width: 6px;
  stroke-linejoin: round;
}

.place {
  fill: #6c6c6c;
}

.district {
  fill: #9a6fa6;
}

.school {
  fill: #6e6828;
  font-style: italic;
}

.street {
  fill: #333;
}

.street .on-trunk {
  fill: #4a1d14;
  stroke: #f9b29c;
}

.street .on-secondary {
  fill: #3c2a12;
  stroke: #fcd6a4;
}

.search {
  position: relative;
  display: flex;
  align-items: center;
  align-self: stretch;
  height: 156px;
  margin: 0 24px;
  padding: 0 36px;
  border-radius: 36px;
  background: #fbfbee;
  box-shadow: 0 8px 18px rgba(0, 0, 0, .3), 0 2px 6px rgba(0, 0, 0, .2);
  color: #46483c;
}

.caret {
  width: 6px;
  height: 72px;
  margin: 0 -6px 0 48px;
  background: #55682a;
}

.search-input {
  flex: 1;
  min-width: 0;
  padding: 0;
  border: 0;
  outline: 0;
  background: none;
  color: inherit;
  font: 50px/72px Roboto, sans-serif;
}

.search-input::placeholder {
  color: #46483c;
  opacity: 1;
}

.attribution {
  position: relative;
  padding: 0 24px;
  border-radius: 18px;
  background: rgba(0, 0, 0, .5);
  color: #fff;
  font-size: 34px;
  line-height: 72px;
  text-decoration: none;
}

/* keyboard */
.keyboard {
  padding-top: 15px;
  background: #1b1f26;
  color: #e2e3e6;
  font-family: Inter, sans-serif;
}

.tools {
  display: flex;
  justify-content: space-between;
  padding: 0 18px;
}

.tool {
  display: flex;
  justify-content: center;
  align-items: center;
  width: 102px;
  height: 102px;
  border-radius: 51px;
}

.dim {
  color: #66696e;
}

.gif {
  font-size: 38px;
  font-weight: 700;
}

.mic {
  background: #2f353c;
}

.keys {
  display: flex;
  flex-direction: column;
  gap: 24px;
  padding: 39px 6px 0;
}

.row {
  display: grid;
  grid-template-columns: repeat(20, minmax(0, 1fr));
  height: 121px;
}

.digits {
  height: 114px;
  margin-bottom: -3px;
}

.bottom {
  height: 131px;
}

.key {
  display: flex;
  justify-content: center;
  align-items: center;
  grid-column: span 2;
  margin: 0 7px;
  padding-bottom: 10px;
  border-radius: 18px;
  background: #2f353c;
  font-size: 68px;
}

.digits .key {
  padding-bottom: 0;
}

.indent {
  grid-column: 2 / span 2;
}

.special {
  padding-bottom: 0;
  background: #374955;
  color: #d3e5f5;
}

.wide {
  grid-column: span 3;
}

.pill {
  border-radius: 66px;
}

.mode {
  font-size: 40px;
  font-weight: 600;
}

.comma {
  flex-direction: column;
  justify-content: flex-start;
  padding-top: 22px;
  font-size: 48px;
  line-height: 40px;
}

.space {
  grid-column: span 10;
  padding-bottom: 0;
  font-size: 38px;
}

.period {
  align-items: flex-end;
  padding-bottom: 28px;
  font-size: 48px;
  line-height: 56px;
}

.nav {
  display: flex;
  height: 175px;
  padding: 33px 35px 0;
}

.hide-keyboard {
  display: flex;
  justify-content: center;
  align-items: center;
  width: 140px;
  height: 140px;
  color: #fff;
}
```
